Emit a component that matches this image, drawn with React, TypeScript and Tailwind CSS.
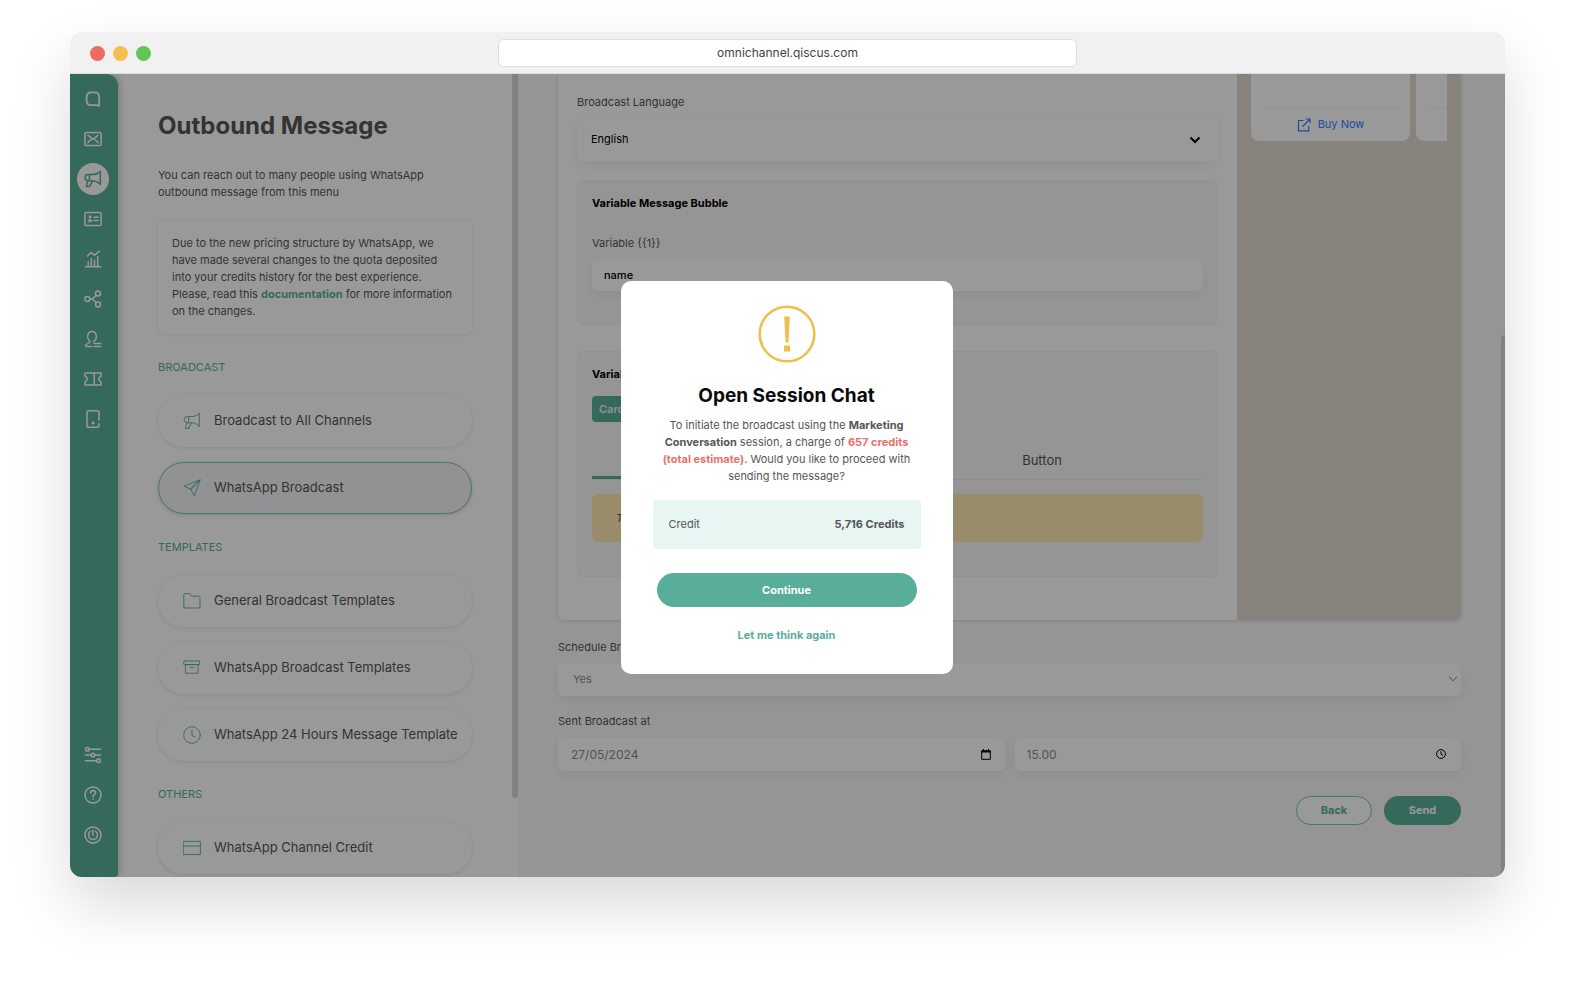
import React from 'react';

type IconProps = {
  children: React.ReactNode;
  className?: string;
  strokeWidth?: number;
};

const Icon = ({ children, className = 'size-[18px]', strokeWidth = 1.5 }: IconProps) => (
  <svg
    viewBox="0 0 18 18"
    className={className}
    fill="none"
    stroke="currentColor"
    strokeWidth={strokeWidth}
    strokeLinecap="round"
    strokeLinejoin="round"
    aria-hidden="true"
  >
    {children}
  </svg>
);

const megaphone = (
  <>
    <path d="M16.3 1.6v13M16.3 1.6c-2.4 2-4.6 3-8 3H4.2a3 3 0 0 0 0 6.2H8c3.400 0 5.800 1.200 8.300 3.400" />
    <path d="M6.200 4.700c-1.200 1.800-1.200 4.200 0 6M4 10.800 2.200 16.400h3.400l3-5.400M5.600 16.400l.8-2.200" />
  </>
);

const mainMenu = [
  {
    name: 'Home',
    icon: <path strokeWidth="1.8" d="M15.200 15.800V7.200c0-3.400-1.400-4.800-4.800-4.800H7.400C4 2.400 2.600 3.800 2.600 7.200v3.200c0 3.400 1.400 4.800 4.800 4.800h4.800z" />
  },
  {
    name: 'Inbox',
    icon: (
      <>
        <rect x=".9" y="2.400" width="16.200" height="13.200" rx="1.400" />
        <path d="m4 5.200 5 4.200 5-4.200M3.800 12.600l2.900-2.800M14.200 12.600l-2.900-2.800" />
      </>
    )
  },
  { name: 'Outbound', icon: megaphone, active: true },
  {
    name: 'Contacts',
    icon: (
      <>
        <rect x=".9" y="2.400" width="16.200" height="13.200" rx="1.400" />
        <path d="M10 7.200h4.200M10 10.400h4.200" />
        <circle cx="6" cy="6.800" r="1.500" fill="currentColor" stroke="none" />
        <path d="M3.900 11.500c0-3.100 4.200-3.100 4.200 0z" fill="currentColor" strokeWidth=".6" />
      </>
    )
  },
  {
    name: 'Analytics',
    icon: <path d="M1.400 16.800h15.400M4.200 16.600v-4.800M7.300 16.600V8.400M10.500 16.600v-6.400M13.700 16.600V6.800M3.600 6 7 2.600l3.600 2.600 4.800-4" />
  },
  {
    name: 'Integration',
    icon: (
      <>
        <circle cx="3.400" cy="9" r="2.500" />
        <circle cx="14" cy="3.500" r="2.500" />
        <circle cx="14" cy="14.600" r="2.500" />
        <path d="M5.900 9h2.500l3.800-3.600M8.400 9l3.800 3.800" />
      </>
    )
  },
  {
    name: 'Agents',
    icon: <path d="M7.600 16.600H1.800v-1.400c.2-1.600 3.800-1.600 4.200-3.600C3.600 9.600 3 6 4.400 3.400 5.800 1 10.200 1 11.600 3.400c1.400 2.600.6 6-1.800 8.200M10 13.400h6.800M10 16.400h6.800" />
  },
  {
    name: 'Tickets',
    icon: <path d="M1 3h16v3.200c-3 .9-3 4.700 0 5.600V15H1v-3.200c3-.9 3-4.700 0-5.600zM10.200 3v12" />
  },
  {
    name: 'Devices',
    icon: (
      <>
        <path d="M15 10V2.600C15 1.400 14.400.8 13.200.8H4.800C3.600.8 3 1.400 3 2.600v12.800c0 1.200.6 1.800 1.800 1.800h8.400c1.200 0 1.800-.6 1.800-1.800v-1.800" />
        <circle cx="9" cy="13" r="1.500" fill="currentColor" stroke="none" />
      </>
    )
  }
];

const bottomMenu = [
  {
    name: 'Settings',
    icon: (
      <>
        <path d="M5.200 3.200h11.400M1.400 9h5.800M10.800 9h5.800M1.400 14.800h11.400" />
        <circle cx="3.400" cy="3.200" r="1.800" />
        <circle cx="9" cy="9" r="1.800" />
        <circle cx="14.600" cy="14.800" r="1.800" />
      </>
    )
  },
  {
    name: 'Help',
    icon: (
      <>
        <circle cx="9" cy="9" r="8" />
        <path d="M6.600 7c0-3.200 4.900-3.200 4.900-.2C11.500 8.700 9 8.600 9 10.800M9 13.100v.1" />
      </>
    )
  },
  {
    name: 'Log out',
    icon: (
      <>
        <circle cx="9" cy="9" r="8" />
        <path d="M6.600 5.200a4.500 4.500 0 1 0 4.800 0M9 4.600v4.600" />
      </>
    )
  }
];

const sections = [
  {
    title: 'BROADCAST',
    items: [
      { name: 'Broadcast to All Channels', icon: megaphone },
      {
        name: 'WhatsApp Broadcast',
        icon: <path d="M17 1 .8 7.200l7 3zM17 1l-5.600 16-3.600-6.800z" />,
        active: true
      }
    ]
  },
  {
    title: 'TEMPLATES',
    items: [
      {
        name: 'General Broadcast Templates',
        icon: <path d="M.8 14.800V2.800c0-.8.4-1.200 1.200-1.200h4.600l1.800 2.600h7.400c.8 0 1.200.4 1.200 1.200v9.400c0 .8-.4 1.200-1.200 1.200H2c-.8 0-1.200-.4-1.200-1.200z" />
      },
      {
        name: 'WhatsApp Broadcast Templates',
        icon: <path d="M1.200 2h15.400v3.600H1.200zM2.800 5.600h12.200v8.600H2.800zM7 8.600h4" />
      },
      {
        name: 'WhatsApp 24 Hours Message Template',
        icon: (
          <>
            <circle cx="9" cy="9" r="8.300" />
            <path d="M9 4v5.600l3.200 1.600" />
          </>
        )
      }
    ]
  },
  {
    title: 'OTHERS',
    items: [
      {
        name: 'WhatsApp Channel Credit',
        icon: <path d="M.6 2.400h16.800v13.200H.6zM.6 7h16.800" />
      }
    ]
  }
];

const IconNav = () => (
  <nav className="z-10 flex w-12 shrink-0 flex-col justify-between rounded-tr-xl rounded-br bg-[#58af99] pt-[9px] pr-[3px] pb-[26px] shadow-[2px_0_6px_rgba(0,0,0,0.2)]">
    <div className="flex flex-col items-center gap-2">
      {mainMenu.map((item) => (
        <button
          key={item.name}
          aria-label={item.name}
          className={`flex size-8 items-center justify-center rounded-full ${
            item.active ? 'bg-white text-[#58af99]' : 'text-white'
          }`}
        >
          <Icon>{item.icon}</Icon>
        </button>
      ))}
    </div>
    <div className="flex flex-col items-center gap-2">
      {bottomMenu.map((item) => (
        <button key={item.name} aria-label={item.name} className="flex size-8 items-center justify-center text-white">
          <Icon>{item.icon}</Icon>
        </button>
      ))}
    </div>
  </nav>
);

const OutboundPanel = () => (
  <aside className="flex w-[400px] shrink-0 overflow-hidden bg-white text-[#565656]">
    <div className="min-w-0 flex-1 px-10 pt-9">
      <h1 className="text-2xl leading-8 font-bold">Outbound Message</h1>
      <p className="mt-[25px] text-[11px] leading-[17px]">
        You can reach out to many people using WhatsApp outbound message from this menu
      </p>
      <div className="mt-5 rounded-md p-[14px] text-[11px] leading-[17px] shadow-[0_0_4px_rgba(0,0,0,0.1)]">
        Due to the new pricing structure by WhatsApp, we have made several changes to the quota deposited into your
        credits history for the best experience. Please, read this{' '}
        <a href="#documentation" className="font-bold text-[#58af99]">
          documentation
        </a>{' '}
        for more information on the changes.
      </div>
      {sections.map((section) => (
        <section key={section.title} className="mt-[25px]">
          <h2 className="text-[11px] leading-4 text-[#58af99]">{section.title}</h2>
          <div className="mt-5 flex flex-col gap-[15px]">
            {section.items.map((item) => (
              <button
                key={item.name}
                className={`flex h-[52px] items-center gap-[13px] rounded-full border pl-6 text-left text-[13px] whitespace-nowrap ${
                  item.active
                    ? 'border-[#7fc2b0] bg-[#f3f2f7] shadow-[0_1px_4px_rgba(0,0,0,0.15)]'
                    : 'border-transparent shadow-[0_1px_4px_rgba(0,0,0,0.1)]'
                }`}
              >
                <Icon className="size-[18px] shrink-0 text-[#58af99]" strokeWidth={0.9}>
                  {item.icon}
                </Icon>
                {item.name}
              </button>
            ))}
          </div>
        </section>
      ))}
    </div>
    <div className="mb-[79px] w-[6px] shrink-0 rounded-b-full bg-[#d9d9d9]" />
  </aside>
);

const fieldShadow = 'shadow-[0_4px_12px_rgba(0,0,0,0.06)]';

const BroadcastForm = () => (
  <div className="min-w-0 flex-1 bg-[#f9f9f9] pr-[44px] pl-10 text-[11px] text-[#565656]">
    <div className="flex rounded-b-md bg-white shadow-[0_1px_4px_rgba(0,0,0,0.15)]">
      <div className="min-w-0 flex-1 px-[19px] pt-5 pb-[43px]">
        <label htmlFor="language" className="block leading-4">
          Broadcast Language
        </label>
        <div className={`relative mt-[7px] rounded-md bg-white ${fieldShadow}`}>
          <select id="language" className="h-[44px] w-full appearance-none px-[14px] text-black">
            <option>English</option>
          </select>
          <svg viewBox="0 0 12 8" className="absolute top-[19px] right-[17px] w-3" fill="none" stroke="#000" strokeWidth="2">
            <path d="m1.500 1.500 4.500 4.500 4.500-4.500" />
          </svg>
        </div>

        <div className="mt-[19px] rounded-md border border-[#f2f2f2] bg-[#f9f9f9] px-[14px] pt-[14px] pb-[33px]">
          <h3 className="leading-4 font-bold text-black">Variable Message Bubble</h3>
          <label htmlFor="variable" className="mt-6 block leading-4">
            {'Variable {{1}}'}
          </label>
          <input
            id="variable"
            defaultValue="name"
            className={`mt-2 h-8 w-full rounded-md bg-white px-3 font-medium text-black ${fieldShadow}`}
          />
        </div>

        <div className="mt-[26px] rounded-md border border-[#f2f2f2] bg-[#f9f9f9] px-[14px] pt-[14px] pb-[34px]">
          <h3 className="leading-4 font-bold text-black">Variable Carousel</h3>
          <button className="mt-[14px] h-[26px] rounded bg-[#58af99] px-[7px] font-semibold text-[#f0f0f0]">Card 1</button>
          <div className="mt-[19px] grid grid-cols-[289fr_322fr] border-b border-[#ececec] text-[13px] leading-[35px]">
            <button className="border-b-[3px] border-[#58af99]">Body</button>
            <button>Button</button>
          </div>
          <p className="mt-[14px] rounded-md bg-[#ffe9b2] px-6 leading-[48px] italic">
            There is no variable on this card
          </p>
        </div>
      </div>

      {/* Message preview */}
      <div className="w-[224px] shrink-0 rounded-br-md bg-[#e4dad2] px-[14px]">
        <div className="flex gap-[6px] overflow-hidden">
          <div className="w-[159px] shrink-0 rounded-b-lg bg-white px-3 pt-[33px]">
            <a
              href="#buy"
              className="flex h-[34px] items-center justify-center gap-[7px] border-t border-[#f2f2f2] text-[#347dff]"
            >
              <svg viewBox="0 0 14 14" className="size-[14px]" fill="none" stroke="currentColor" strokeWidth="1.200">
                <path d="M6.500 2.500h-5v10.300h10.300v-5M8.800 1h4.200v4.200M13 1 5.500 8.500" />
              </svg>
              Buy Now
            </a>
          </div>
          <div className="w-[159px] shrink-0 rounded-b-lg bg-white px-3 pt-[33px]">
            <div className="border-t border-[#f2f2f2]" />
          </div>
        </div>
      </div>
    </div>

    <label htmlFor="schedule" className="mt-[19px] block leading-4">
      Schedule Broadcast
    </label>
    <div className={`relative mt-2 rounded-md bg-white ${fieldShadow}`}>
      <select id="schedule" className="h-[33px] w-full appearance-none px-[15px] text-[#8c8c8c]">
        <option>Yes</option>
      </select>
      <svg viewBox="0 0 10 6" className="absolute top-[13px] right-[3px] w-[10px]" fill="none" stroke="#777">
        <path d="m1 .8 4 4 4-4" />
      </svg>
    </div>

    <label htmlFor="date" className="mt-[17px] block leading-4">
      Sent Broadcast at
    </label>
    <div className="mt-2 grid grid-cols-2 gap-[10px] text-xs">
      <div className={`flex items-center rounded-md bg-white pr-[14px] pl-[13px] ${fieldShadow}`}>
        <input id="date" defaultValue="27/05/2024" className="h-[34px] min-w-0 flex-1 text-[#8c8c8c]" />
        <svg viewBox="0 0 10 11" className="w-[10px]" fill="none" stroke="#000">
          <path d="M.7 1.700h8.600v8.600H.7zM.7 3h8.600M.7 2.400h8.600M2.500 0v2M7.500 0v2" />
        </svg>
      </div>
      <div className={`flex items-center rounded-md bg-white pr-[15px] pl-3 ${fieldShadow}`}>
        <input aria-label="Time" defaultValue="15.00" className="h-[34px] min-w-0 flex-1 text-[#8c8c8c]" />
        <svg viewBox="0 0 10 10" className="w-[10px]" fill="none" stroke="#000">
          <circle cx="5" cy="5" r="4.400" />
          <path d="M5 2.200v3l2 1.300" />
        </svg>
      </div>
    </div>

    <div className="mt-[25px] flex justify-end gap-3 font-bold">
      <button className="h-[29px] w-[76px] rounded-full border border-[#7fc2b0] bg-white text-[#58af99]">Back</button>
      <button className="h-[29px] w-[77px] rounded-full bg-[#58af99] text-white">Send</button>
    </div>
  </div>
);

const SessionDialog = () => (
  <div
    role="dialog"
    aria-labelledby="dialog-title"
    className="w-[332px] rounded-[10px] bg-white px-8 pt-6 pb-[31px] text-center text-[11px] text-[#565656]"
  >
    <svg viewBox="0 0 58 58" className="mx-auto size-[58px]" fill="none" aria-hidden="true">
      <circle cx="29" cy="29" r="27.300" stroke="#ecc04f" strokeWidth="2.600" />
      <path d="M26.200 11.500h5.600l-1.300 26h-3zM26 40.500h6v6h-6z" fill="#ecc04f" />
    </svg>
    <h2 id="dialog-title" className="mt-[19px] text-[19px] leading-7 font-bold text-[#0a0a0a]">
      Open Session Chat
    </h2>
    <p className="mt-[7px] leading-[17px]">
      To initiate the broadcast using the <b className="font-bold">Marketing Conversation</b> session, a charge of{' '}
      <b className="font-bold text-[#e8706b]">657 credits (total estimate)</b>. Would you like to proceed with sending
      the message?
    </p>
    <div className="mt-[15px] flex h-[49px] items-center justify-between rounded bg-[#e7f5f3] px-4">
      <span>Credit</span>
      <span className="font-bold">5,716 Credits</span>
    </div>
    <div className="mt-6 px-1">
      <button className="h-[34px] w-full rounded-full bg-[#58ae9a] font-bold text-white">Continue</button>
      <button className="mt-5 leading-4 font-bold text-[#58ae9a]">Let me think again</button>
    </div>
  </div>
);

const App = () => {
  return (
    <div className="flex h-screen flex-col bg-white px-[70px] pt-8 pb-[110px] font-['Inter',sans-serif]">
      <div className="flex min-h-0 flex-1 flex-col overflow-hidden rounded-xl shadow-[0_28px_60px_rgba(0,0,0,0.15)]">
        {/* Browser bar */}
        <header className="grid h-[42px] shrink-0 grid-cols-[1fr_579px_1fr] items-center border-b border-[#dcdcdc] bg-[#f1f1f1]">
          <div className="flex gap-2 pt-[2px] pl-5">
            <span className="size-[15px] rounded-full bg-[#ed6b60]" />
            <span className="size-[15px] rounded-full bg-[#f5bf4f]" />
            <span className="size-[15px] rounded-full bg-[#62c655]" />
          </div>
          <input
            aria-label="Address"
            defaultValue="omnichannel.qiscus.com"
            className="h-7 rounded-md border border-[#dedede] bg-white text-center text-xs text-[#444]"
          />
        </header>

        <main className="relative flex min-h-0 flex-1 overflow-hidden bg-white">
          <IconNav />
          <OutboundPanel />
          <BroadcastForm />
          <div className="absolute top-[261px] right-0 bottom-0 w-1 rounded-tl bg-[#d9d9d9]" />

          <div className="absolute inset-0 z-20 flex items-center justify-center bg-black/40 pt-1 pr-[2px]">
            <SessionDialog />
          </div>
        </main>
      </div>
    </div>
  );
};

export default App;
